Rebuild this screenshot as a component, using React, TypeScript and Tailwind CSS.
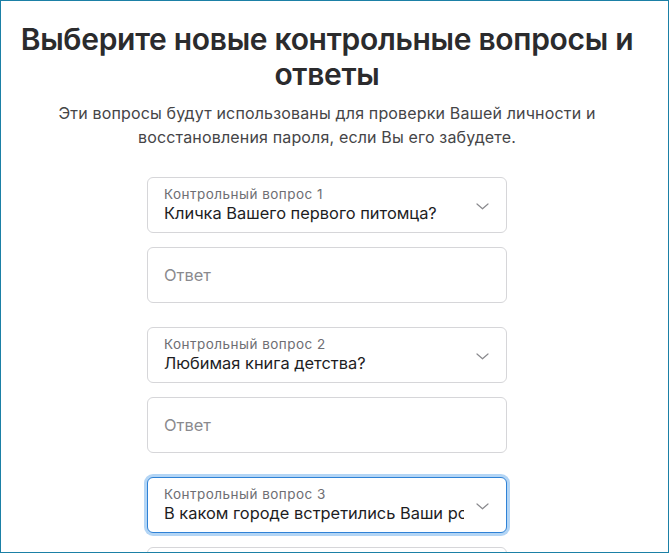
const questions = [
  { label: "Контрольный вопрос 1", value: "Кличка Вашего первого питомца?", focused: false },
  { label: "Контрольный вопрос 2", value: "Любимая книга детства?", focused: false },
  { label: "Контрольный вопрос 3", value: "В каком городе встретились Ваши родители?", focused: true },
];

function Chevron() {
  return (
    <svg width="13" height="7" viewBox="0 0 13 7" className="absolute right-[17px] top-[25px]">
      <path d="M1 1l5.5 4.8L12 1" fill="none" stroke="#8a8a8e" strokeWidth="1.2" strokeLinecap="round" strokeLinejoin="round" />
    </svg>
  );
}

function QuestionSelect({ label, value, focused }: { label: string; value: string; focused: boolean }) {
  return (
    <div
      className={
        focused
          ? "relative h-[56px] w-full rounded-[6px] border border-[#2f82d6] bg-white pl-4 pr-[42px] pt-[8px] ring-[3px] ring-[#b3d5f5]"
          : "relative h-[56px] w-full rounded-[6px] border border-[#d6d6d9] bg-white pl-4 pr-[42px] pt-[8px]"
      }
    >
      <div className="text-[13.5px] leading-[16px] tracking-[0.035em] text-[#6e6e73]">{label}</div>
      <div className="overflow-hidden whitespace-nowrap text-[16.4px] leading-[22px] text-[#1d1d1f]">{value}</div>
      <Chevron />
    </div>
  );
}

function AnswerInput() {
  return (
    <div className="flex h-[56px] w-full items-center rounded-[6px] border border-[#d6d6d9] bg-white px-4">
      <span className="text-[16.4px] leading-[22px] text-[#8a8a8e]">Ответ</span>
    </div>
  );
}

export default function App() {
  return (
    <div
      className="box-border h-[553px] w-[669px] overflow-hidden border border-[#1b80a6] bg-white"
      style={{ fontFamily: "Inter, 'Noto Sans', sans-serif" }}
    >
      <div className="flex w-[652px] flex-col items-center pt-[21px]">
        <h1 className="whitespace-nowrap text-center text-[30px] font-semibold leading-[35px] tracking-[-0.01em] text-[#2b2b2d]">
          Выберите новые контрольные вопросы и
          <br />
          ответы
        </h1>
        <p className="mt-[9px] whitespace-nowrap text-center text-[16px] leading-[24px] tracking-[0.01em] text-[#454547]">
          Эти вопросы будут использованы для проверки Вашей личности и
          <br />
          восстановления пароля, если Вы его забудете.
        </p>
        <div className="mt-[28px] flex w-[360px] flex-col">
          {questions.map((q) => (
            <div key={q.label} className="flex flex-col gap-[14px] pb-[24px]">
              <QuestionSelect label={q.label} value={q.value} focused={q.focused} />
              <AnswerInput />
            </div>
          ))}
        </div>
      </div>
    </div>
  );
}
